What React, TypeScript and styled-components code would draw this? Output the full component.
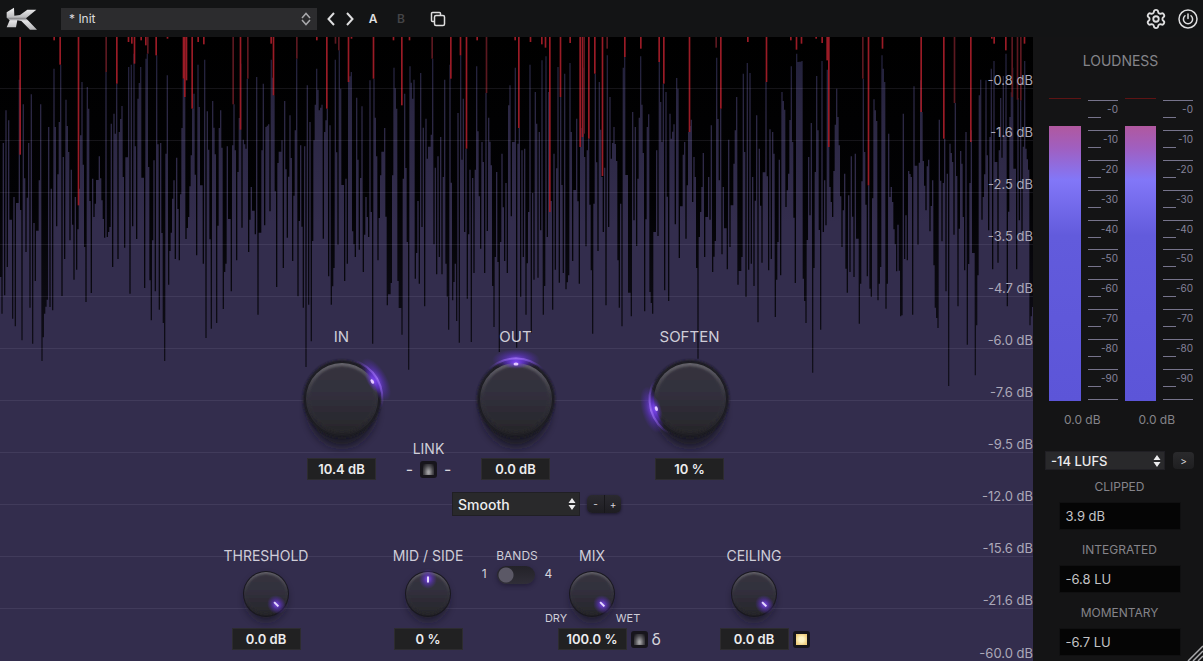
import React from 'react';
import styled, { createGlobalStyle } from 'styled-components';
import { Settings } from 'lucide-react';

const GlobalStyle = createGlobalStyle`
  *, *::before, *::after { box-sizing: border-box; }
  body { margin: 0; background: #131415; font-family: Inter, "Liberation Sans", sans-serif; }
  button, input, select { font: inherit; color: inherit; margin: 0; }
`;

/* ---------- waveform data ---------- */

const STRIDE = 1200;

const PEAKS_A = [
  [8,338],[19,240],[26,270],[43,500],[57,148],[70,222],[84,338],[92,192],[103,578],[116,450],[120,222],[144,290],[151,475],[161,115],[165,290],[176,275],[180,103],[190,380],[199,208],[207,365],[214,418],[226,500],[238,475],[244,155],[262,170],[266,235],[276,445],[285,520],[297,378],[306,510],[317,125],[335,280],[342,250],[347,310],[350,160],[356,305],[367,227],[384,110],[395,103],[403,70],[413,205],[423,110],[437,85],[443,70],[460,390],[468,75],[472,342],[478,338],[496,370],[502,135],[520,450],[528,382],[545,293],[550,145],[555,200],[573,375],[577,235],[583,190],[594,103],[598,230],[611,88],[618,243],[626,358],[636,212],[646,372],[657,293],[660,240],[667,352],[683,348],[695,345],[699,222],[704,360],[714,425],[721,100],[729,328],[737,355],[743,145],[754,470],[768,140],[788,160],[785,360],[799,290],[807,282],[813,88],[822,195],[834,398],[845,330],[855,212],[868,255],[873,383],[886,300],[890,85],[900,345],[915,348],[921,165],[927,275],[943,330],[950,115],[958,240],[966,223],[974,305],[980,235],[988,285],[1006,88],[1016,60],[1021,175],[1035,445],[1045,150],[1054,125],[1068,202],[1075,388],[1085,228],[1099,500],[1109,150],[1120,145],[1131,378],[1142,435],[1155,293],[1180,112],[1190,235],
];
const PEAKS_B = [
  [10,445],[15,190],[28,108],[36,205],[39,148],[52,512],[63,128],[70,292],[77,265],[82,385],[92,313],[96,85],[101,412],[112,378],[123,320],[133,148],[150,103],[171,248],[181,75],[186,388],[191,205],[199,355],[210,418],[218,443],[231,108],[236,498],[244,335],[249,395],[259,188],[266,262],[272,405],[290,425],[304,370],[318,458],[325,225],[330,165],[345,112],[353,340],[358,293],[364,360],[371,355],[391,103],[398,488],[405,185],[410,280],[416,305],[425,90],[436,78],[447,185],[461,370],[474,110],[482,200],[492,130],[510,98],[514,305],[528,265],[540,350],[545,293],[550,112],[561,360],[566,325],[584,130],[596,155],[607,440],[614,412],[621,75],[629,200],[642,290],[635,385],[648,392],[658,520],[670,112],[675,80],[697,245],[704,290],[714,445],[722,78],[729,368],[741,290],[746,252],[768,360],[777,95],[784,335],[791,160],[798,185],[808,250],[815,325],[820,282],[827,143],[832,175],[851,373],[855,335],[867,305],[872,268],[878,380],[885,440],[904,470],[911,368],[924,440],[932,285],[948,82],[956,450],[962,235],[970,470],[987,328],[1002,400],[1008,200],[1029,130],[1034,365],[1043,98],[1050,128],[1057,440],[1068,255],[1078,355],[1099,155],[1109,297],[1116,305],[1120,370],[1137,388],[1147,185],[1154,238],[1167,430],[1172,108],[1189,70],[1193,95],
];
const PEAKS_C = [
  [124,92],[144,380],[152,278],[168,137],[175,300],[186,92],[193,450],[201,118],[206,350],[211,470],[224,283],[231,175],[236,345],[252,430],[263,495],[273,378],[287,370],[308,145],[313,365],[325,465],[343,207],[348,272],[367,75],[372,155],[381,310],[388,500],[395,470],[413,583],[430,250],[437,555],[444,422],[455,440],[461,168],[480,150],[485,245],[490,392],[500,408],[507,388],[517,450],[538,268],[549,458],[553,325],[562,430],[570,340],[577,395],[583,218],[590,437],[602,362],[607,400],[619,305],[629,458],[635,300],[657,195],[663,148],[672,432],[678,150],[687,320],[695,115],[702,92],[717,360],[722,203],[737,70],[751,260],[757,112],[772,203],[783,210],[793,92],[798,355],[807,418],
];
const DIPS_A = [
  [1,740],[4,850],[15,795],[22,710],[36,865],[47,888],[64,930],[78,665],[89,832],[98,940],[107,752],[127,992],[134,850],[140,808],[148,830],[154,840],[170,588],[183,797],[194,686],[210,630],[220,748],[231,718],[252,650],[258,815],[273,788],[280,560],[314,622],[321,620],[328,590],[339,710],[353,686],[374,652],[391,790],[398,588],[409,626],[433,773],[451,750],[455,870],[465,783],[475,838],[489,878],[492,992],[507,763],[523,686],[538,690],[556,626],[566,560],[590,675],[608,700],[614,923],[632,895],[650,878],[670,836],[675,725],[679,700],[692,783],[709,690],[726,592],[747,665],[765,612],[775,853],[793,585],[810,543],[830,770],[849,713],[862,622],[876,692],[894,798],[911,832],[918,1010],[924,823],[932,933],[970,625],[984,738],[995,823],[1001,713],[1012,643],[1032,752],[1040,700],[1057,603],[1065,680],[1078,658],[1089,725],[1105,620],[1116,940],[1134,690],[1162,825],[1175,758],[1193,752],
];
const DIPS_B = [
  [7,913],[20,635],[25,1018],[42,745],[48,668],[59,760],[67,590],[74,828],[97,642],[105,732],[119,680],[126,732],[139,700],[144,898],[158,810],[164,700],[168,872],[175,937],[195,605],[203,805],[213,935],[220,728],[241,655],[255,728],[262,602],[276,767],[283,890],[286,680],[297,965],[300,635],[314,692],[321,728],[334,558],[348,952],[359,800],[367,680],[377,853],[384,545],[393,907],[402,748],[411,742],[419,600],[430,853],[433,767],[443,620],[457,838],[465,718],[478,757],[489,728],[499,777],[506,735],[518,692],[537,760],[557,648],[574,720],[579,910],[593,662],[611,605],[618,825],[625,590],[653,690],[656,832],[663,888],[685,787],[689,787],[694,858],[700,570],[708,647],[732,843],[750,785],[757,850],[774,617],[795,780],[806,812],[824,582],[838,683],[858,625],[876,515],[893,985],[897,620],[914,680],[929,568],[935,725],[946,632],[965,672],[980,717],[991,650],[1012,763],[1026,680],[1036,800],[1046,718],[1053,700],[1060,767],[1071,876],[1085,697],[1105,720],[1112,686],[1127,860],[1134,635],[1141,735],[1158,530],[1180,562],[1186,758],
];
const DIPS_C = [
  [127,745],[138,878],[149,555],[158,1027],[162,713],[183,898],[190,605],[197,585],[218,560],[245,650],[256,715],[260,787],[269,725],[280,740],[297,880],[300,760],[316,523],[322,738],[331,775],[335,800],[353,810],[360,710],[374,835],[378,760],[409,723],[420,858],[424,855],[433,686],[440,690],[458,853],[472,643],[496,540],[511,603],[520,705],[524,832],[534,893],[545,633],[558,783],[566,1067],[580,613],[593,828],[612,720],[622,943],[646,1035],[653,735],[667,568],[684,600],[698,717],[713,697],[743,828],[768,717],[778,570],[786,605],[811,885],[816,830],
];

const REDS: [number, number][] = [
  [60,373],[162,30],[180,103],[235,525],[318,125],[350,160],[385,35],[395,40],[403,100],[423,30],[437,45],[443,70],[468,75],[502,25],[550,145],[554,200],[559,150],[576,235],[594,35],[611,42],[699,222],[721,298],[743,145],[813,40],[820,195],[890,85],[950,30],[980,235],[1006,40],[1016,60],[1045,155],[1054,25],[1120,145],[1180,30],
  [1205,225],[1228,30],[1296,85],[1352,145],[1381,75],[1399,355],[1431,30],[1459,188],[1545,30],[1556,293],[1591,35],[1625,42],[1636,52],[1649,545],[1681,200],[1710,38],[1740,350],[1747,320],[1752,310],[1766,325],[1784,130],[1807,437],[1821,55],[1874,80],[1922,55],[1977,95],[1991,160],[2068,305],[2148,52],[2162,235],[2243,35],[2299,155],[2372,30],[2389,58],
  [2404,40],[2448,25],[2466,38],[2486,350],[2481,90],[2588,145],[2605,465],[2647,55],[2763,245],[2831,325],[2863,218],[2912,335],[2975,25],[2982,40],[3017,60],[3036,200],[3052,208],[3062,210],[3073,40],
];
const FAINT_REDS = new Set([318, 443, 699, 743, 890, 1006, 1016, 1296, 1459, 1752, 1821, 2148, 2588, 2863, 3052, 3062, 3036]);

const WAVE_W = 3099;
const WAVE_H = 1872;
const TOP = 20;
const COL = 4;

function buildSurface() {
  const count = Math.ceil(WAVE_W / COL);
  const columns: (number | null)[] = new Array(count).fill(null);
  const shifted = (points: number[][], by: number) => points.map(([x, y]) => [x + by, y]);
  const all = [
    ...PEAKS_A,
    ...shifted(PEAKS_B, STRIDE),
    ...shifted(PEAKS_C, 2280),
    ...DIPS_A,
    ...shifted(DIPS_B, STRIDE),
    ...shifted(DIPS_C, 2280),
  ].sort((a, b) => a[0] - b[0]);
  all.forEach(([x, y]) => {
    const slot = Math.min(count - 1, Math.floor(x / COL));
    const free = columns[slot] === null ? slot : columns[slot + 1] === null ? slot + 1 : slot;
    columns[free] = y;
  });
  let path = `M0 ${WAVE_H}`;
  columns.forEach((value, i) => {
    const before = columns[i - 1] ?? columns[i - 2] ?? 560;
    const after = columns[i + 1] ?? columns[i + 2] ?? 560;
    const y = (value ?? (before + after) / 2) - TOP;
    path += `L${i * COL} ${Math.round(y)}H${(i + 1) * COL}`;
  });
  return `${path}V${WAVE_H}Z`;
}
const SURFACE = buildSurface();

/* ---------- shell ---------- */

const Shell = styled.div`
  min-height: 100vh;
  display: flex;
  flex-direction: column;
  background: #131415;
  color: #d6d5dc;
`;

const Header = styled.header`
  height: 37px;
  flex: none;
  display: flex;
  align-items: center;
  padding: 0 5px 0 6px;
  background: #131415;
`;

const PresetPicker = styled.div`
  position: relative;
  width: 256px;
  margin: 0 8px 0 23px;
  color: #a9a9ac;
  svg { position: absolute; right: 6px; top: 4px; pointer-events: none; }
`;

const PresetSelect = styled.select`
  appearance: none;
  display: block;
  width: 100%;
  height: 22px;
  border: 0;
  border-radius: 0;
  padding: 0 8px;
  background: #2c2c2e;
  color: #dcdcde;
  font-size: 12px;
`;

const HeaderButton = styled.button<{ $w: number; $dim?: boolean }>`
  width: ${(p) => p.$w}px;
  height: 24px;
  border: 0;
  padding: 0;
  background: none;
  display: flex;
  align-items: center;
  justify-content: center;
  color: ${(p) => (p.$dim ? '#444447' : '#dededf')};
  font-size: 12px;
  font-weight: 600;
`;

const HeaderTools = styled.div`
  display: flex;
  gap: 11px;
  margin-left: auto;
`;

const Main = styled.main`
  flex: 1;
  display: flex;
`;

/* ---------- stage ---------- */

const Stage = styled.section`
  position: relative;
  flex: 1;
  min-width: 0;
  overflow: hidden;
  background: #332d4d;
`;

const WaveCanvas = styled.svg`
  position: absolute;
  inset: 0;
  width: 100%;
  height: 100%;
`;

const Scale = styled.div`
  position: absolute;
  inset: 0;
  display: grid;
  grid-template-rows: repeat(12, 1fr);
`;

const ScaleRow = styled.div`
  display: flex;
  align-items: flex-end;
  justify-content: flex-end;
  border-bottom: 1px solid rgba(170, 165, 200, 0.12);
  font-size: 13px;
  line-height: 15px;
  color: #aba8b8;
  &:last-child { border-bottom: 0; }
`;

const Controls = styled.div`
  position: relative;
  padding: 292px 2px 0 0;
`;

const KnobRow = styled.div<{ $cols: string; $top?: number }>`
  display: grid;
  grid-template-columns: ${(p) => p.$cols};
  justify-content: center;
  margin-top: ${(p) => p.$top ?? 0}px;
`;

const Cell = styled.div<{ $end?: boolean }>`
  display: flex;
  flex-direction: column;
  align-items: center;
  justify-content: ${(p) => (p.$end ? 'flex-end' : 'flex-start')};
`;

const Caption = styled.label<{ $size: number }>`
  font-size: ${(p) => p.$size}px;
  line-height: 16px;
  color: #cfcdd8;
  white-space: nowrap;
`;

const Dial = styled.div<{ $size: number; $gap: number; $below: number }>`
  position: relative;
  width: ${(p) => p.$size}px;
  height: ${(p) => p.$size}px;
  margin: ${(p) => p.$gap}px 0 ${(p) => p.$below}px;
  svg { display: block; overflow: visible; }
  input { position: absolute; inset: 0; width: 100%; height: 100%; opacity: 0; }
`;

const DialRow = styled.div`
  display: flex;
  align-items: flex-end;
`;

const DialEnd = styled.span`
  width: 26px;
  font-size: 11px;
  line-height: 12px;
  margin-bottom: 4px;
  text-align: center;
  color: #cfcdd8;
`;

const ReadoutRow = styled.div`
  display: grid;
  grid-template-columns: 1fr auto 1fr;
  align-items: center;
  width: 100%;
`;

const ReadoutSide = styled.div`
  display: flex;
  align-items: center;
  gap: 4px;
  padding-left: 4px;
  width: 0;
  font-size: 16px;
  line-height: 20px;
`;

const Readout = styled.input`
  grid-column: 2;
  width: 69px;
  height: 22px;
  border: 1px solid #2d2c2f;
  padding: 0;
  background: #212122;
  color: #ececee;
  text-align: center;
  font-size: 13px;
  font-weight: 600;
`;

const LitBox = styled.input<{ $tone: 'off' | 'amber' }>`
  appearance: none;
  flex: none;
  width: 17px;
  height: 17px;
  border: 3px solid #17151c;
  border-radius: 3px;
  background: ${(p) =>
    p.$tone === 'amber'
      ? 'radial-gradient(circle, #fff3c4 30%, #f0cd7c 80%)'
      : 'radial-gradient(ellipse at 50% 75%, #a3a2a5 10%, #4b4a4f 55%, #1c1b20 90%)'};
`;

const LinkRow = styled.div`
  display: flex;
  align-items: center;
  gap: 7px;
  height: 22px;
  margin-top: 1px;
`;

const PillRow = styled.div`
  display: flex;
  align-items: center;
  gap: 10px;
  font-size: 12px;
  line-height: 16px;
`;

const PillSwitch = styled.input`
  appearance: none;
  width: 38px;
  height: 18px;
  margin-top: 2px;
  border-radius: 9px;
  background: radial-gradient(circle at 9px 9px, #5b5866 7px, transparent 8px), linear-gradient(#232228, #302e38);
  box-shadow: 0 2px 4px rgba(20, 16, 36, 0.5);
`;

const ModeRow = styled.div`
  display: flex;
  align-items: center;
  justify-content: center;
  gap: 7px;
  margin-top: 12px;
  padding-left: 42px;
`;

const Picker = styled.div<{ $w: number }>`
  position: relative;
  width: ${(p) => p.$w}px;
  color: #ececee;
  svg { position: absolute; right: 4px; top: 50%; margin-top: -6px; pointer-events: none; }
`;

const PickerSelect = styled.select<{ $h: number; $size: number }>`
  appearance: none;
  display: block;
  width: 100%;
  height: ${(p) => p.$h}px;
  border: 1px solid #201f24;
  border-radius: 0;
  padding: 0 5px;
  background: #29292b;
  font-size: ${(p) => p.$size}px;
  font-weight: 500;
`;

const StepPair = styled.div`
  display: flex;
  border-radius: 5px;
  overflow: hidden;
  box-shadow: 0 1px 3px rgba(10, 8, 20, 0.6);
`;

const StepButton = styled.button`
  width: 17px;
  height: 18px;
  border: 0;
  padding: 0;
  background: linear-gradient(#2b2a30, #1e1d22);
  color: #d6d5dc;
  font-size: 10px;
  line-height: 16px;
  & + & { border-left: 1px solid #18171b; }
`;

/* ---------- loudness sidebar ---------- */

const Sidebar = styled.aside`
  width: 170px;
  flex: none;
  position: relative;
  padding: 16px 9px 0 12px;
  background: #141415;
  color: #85848a;
`;

const SideTitle = styled.h2`
  margin: 0;
  padding-left: 2px;
  text-align: center;
  font-size: 14px;
  font-weight: 400;
  line-height: 16px;
`;

const Meters = styled.div`
  display: grid;
  grid-template-columns: 32px 30px 31px 30px;
  column-gap: 7px;
  margin: 29px 0 0 4px;
`;

const MeterTrack = styled.div`
  height: 303px;
  display: flex;
  flex-direction: column;
  border-top: 1px solid #5e1414;
`;

const MeterFill = styled.div`
  height: 275px;
  margin-top: auto;
  background: linear-gradient(#b0589f 0, #a05fc0 22px, #8277f8 54px, #625bdc 110px, #5c55d8 100%);
`;

const MeterScale = styled.div`
  display: grid;
  grid-template-rows: repeat(10, 1fr);
  margin-top: 2px;
  border-bottom: 1px solid #77748c;
  height: 300px;
`;

const MeterStep = styled.div`
  border-top: 1px solid #77748c;
  text-align: right;
  font-size: 10px;
  line-height: 17px;
  color: #85839a;
  &::after { content: ''; display: block; width: 13px; height: 1px; margin-top: -1px; background: #77748c; }
`;

const PeakRow = styled.div`
  display: grid;
  grid-template-columns: 1fr 1fr;
  margin-top: 11px;
  font-size: 12px;
  line-height: 16px;
  text-align: center;
`;

const TargetRow = styled.div`
  display: flex;
  align-items: center;
  justify-content: space-between;
  margin-top: 23px;
`;

const NextButton = styled.button`
  width: 21px;
  height: 17px;
  border: 0;
  border-radius: 4px;
  padding: 0;
  background: linear-gradient(#2a2a2c, #1f1f21);
  color: #d6d5dc;
  font-size: 10px;
  line-height: 16px;
`;

const Stats = styled.div`
  display: flex;
  flex-direction: column;
  gap: 12px;
  margin-top: 9px;
`;

const Stat = styled.div`
  display: flex;
  flex-direction: column;
  align-items: center;
  label { font-size: 12px; line-height: 16px; }
  input {
    width: 122px;
    height: 28px;
    margin-top: 7px;
    border: 1px solid #101011;
    padding: 0 6px;
    background: #050505;
    color: #c4c4c6;
    font-size: 13px;
  }
`;

const Grip = styled.svg`
  position: absolute;
  right: 0;
  bottom: 0;
`;

/* ---------- parts ---------- */

const Logo = () => (
  <svg width="32" height="24" viewBox="18 20 96 72" role="img" aria-label="K">
    <defs>
      <linearGradient id="steel" x1="0" y1="0" x2="0" y2="1">
        <stop offset="0" stopColor="#f4f4f5" />
        <stop offset=".42" stopColor="#bdbdbf" />
        <stop offset=".5" stopColor="#8a8a8d" />
        <stop offset=".6" stopColor="#e4e4e6" />
        <stop offset="1" stopColor="#b4b4b6" />
      </linearGradient>
    </defs>
    <path d="M20 36 42 22 43 46 60 44 82 28H109L78 54 111 88H90L64 62 52 60 48 81H20L29 60 20 52Z" fill="url(#steel)" />
  </svg>
);

const SmallArrows = () => (
  <svg width="8" height="12" viewBox="0 0 8 12" fill="currentColor" aria-hidden="true">
    <path d="M4 0 7.500 5H.5ZM4 12 .5 7H7.500Z" />
  </svg>
);

const DefsHost = styled.svg`
  position: absolute;
`;

const Defs = () => (
  <DefsHost width="0" height="0" aria-hidden="true">
    <defs>
      <linearGradient id="rim" x1="0" y1="0" x2="0" y2="1">
        <stop offset="0" stopColor="#66646c" />
        <stop offset=".45" stopColor="#35343d" />
        <stop offset="1" stopColor="#222126" />
      </linearGradient>
      <linearGradient id="face" x1="0" y1="0" x2="0" y2="1">
        <stop offset="0" stopColor="#36343d" />
        <stop offset=".45" stopColor="#312f3c" />
        <stop offset="1" stopColor="#27272a" />
      </linearGradient>
      <linearGradient id="arc" x1="0" y1="0" x2="1" y2="0">
        <stop offset="0" stopColor="#7a4be0" stopOpacity="0" />
        <stop offset=".5" stopColor="#a87cf5" />
        <stop offset="1" stopColor="#7a4be0" stopOpacity="0" />
      </linearGradient>
      <radialGradient id="halo">
        <stop offset="0" stopColor="#8a50ff" stopOpacity=".95" />
        <stop offset=".5" stopColor="#6534d8" stopOpacity=".5" />
        <stop offset="1" stopColor="#5a2cc8" stopOpacity="0" />
      </radialGradient>
      <filter id="soft" x="-40%" y="-40%" width="180%" height="180%">
        <feGaussianBlur stdDeviation="4" />
      </filter>
      <filter id="edge" x="-10%" y="-10%" width="120%" height="120%">
        <feGaussianBlur stdDeviation="1" />
      </filter>
    </defs>
  </DefsHost>
);

const BigFace = ({ angle }: { angle: number }) => (
  <svg width="76" height="76" viewBox="-38 -38 76 76" aria-hidden="true">
    <ellipse cy="10" rx="34" ry="38" fill="#17141f" opacity=".8" filter="url(#soft)" />
    <circle r="39" fill="#1b1a22" filter="url(#edge)" />
    <g transform={`rotate(${angle})`}>
      <ellipse cy="-39" rx="24" ry="11" fill="url(#halo)" />
    </g>
    <circle r="36" fill="url(#rim)" />
    <circle r="33" fill="url(#face)" filter="url(#edge)" />
    <g transform={`rotate(${angle})`}>
      <path d="M-28 -29A40 40 0 0 1 28 -29" fill="none" stroke="url(#arc)" strokeWidth="2" />
      <ellipse cy="-36" rx="14" ry="6" fill="url(#halo)" />
      <ellipse cy="-35" rx="2.500" ry="1.500" fill="#e2c8ff" />
    </g>
  </svg>
);

const SmallFace = ({ angle }: { angle: number }) => (
  <svg width="46" height="46" viewBox="-23 -23 46 46" aria-hidden="true">
    <ellipse cy="5" rx="20" ry="22" fill="#17141f" opacity=".7" filter="url(#soft)" />
    <circle r="23" fill="#19181f" />
    <circle r="22" fill="url(#rim)" />
    <circle r="20" fill="url(#face)" filter="url(#edge)" />
    <g transform={`rotate(${angle})`}>
      <ellipse cy="-15" rx="9" ry="10" fill="url(#halo)" />
      <path d="M0 -17.500V-11.500" stroke="#e6dcff" strokeWidth="2" />
    </g>
  </svg>
);

type KnobProps = {
  name: string;
  value: string;
  angle: number;
  level: number;
  big?: boolean;
  ends?: [string, string];
  side?: React.ReactNode;
};

const Knob = ({ name, value, angle, level, big, ends, side }: KnobProps) => {
  const id = `knob-${name.replace(/[^A-Z]/g, '').toLowerCase()}`;
  return (
    <Cell>
      <Caption $size={big ? 15 : 14} htmlFor={id}>
        {name}
      </Caption>
      <DialRow>
        {ends && <DialEnd>{ends[0]}</DialEnd>}
        <Dial $size={big ? 76 : 46} $gap={big ? 16 : 7} $below={big ? 21 : 11}>
          {big ? <BigFace angle={angle} /> : <SmallFace angle={angle} />}
          <input id={id} type="range" min={0} max={100} defaultValue={level} />
        </Dial>
        {ends && <DialEnd>{ends[1]}</DialEnd>}
      </DialRow>
      <ReadoutRow>
        <Readout type="text" defaultValue={value} aria-label={`${name} value`} />
        {side && <ReadoutSide>{side}</ReadoutSide>}
      </ReadoutRow>
    </Cell>
  );
};

const Waveform = () => (
  <WaveCanvas viewBox={`0 0 ${WAVE_W} ${WAVE_H}`} preserveAspectRatio="none" aria-hidden="true">
    <defs>
      <linearGradient id="surface" gradientUnits="userSpaceOnUse" x1="0" y1="0" x2="0" y2="560">
        <stop offset="0" stopColor="#1f1f38" />
        <stop offset=".4" stopColor="#2b2743" />
        <stop offset="1" stopColor="#332d4d" />
      </linearGradient>
      <linearGradient id="depth" gradientUnits="userSpaceOnUse" x1="0" y1="0" x2="0" y2="1000">
        <stop offset="0" stopColor="#000000" />
        <stop offset=".5" stopColor="#020204" />
        <stop offset="1" stopColor="#12101c" />
      </linearGradient>
    </defs>
    <rect width={WAVE_W} height="1100" fill="url(#depth)" />
    <path d={SURFACE} fill="url(#surface)" />
    {REDS.map(([x, y]) => (
      <rect key={x} x={x - 2} width="5" height={y - TOP} fill={FAINT_REDS.has(x) ? '#5c1820' : '#9a1b26'} />
    ))}
  </WaveCanvas>
);

const LEVELS = ['-0.8', '-1.6', '-2.5', '-3.5', '-4.7', '-6.0', '-7.6', '-9.5', '-12.0', '-15.6', '-21.6', '-60.0'];
const STEPS = ['-0', '-10', '-20', '-30', '-40', '-50', '-60', '-70', '-80', '-90'];
const STATS = [
  ['CLIPPED', '3.9 dB'],
  ['INTEGRATED', '-6.8 LU'],
  ['MOMENTARY', '-6.7 LU'],
];

const Meter = () => (
  <>
    <MeterTrack>
      <MeterFill />
    </MeterTrack>
    <MeterScale>
      {STEPS.map((s) => (
        <MeterStep key={s}>{s}</MeterStep>
      ))}
    </MeterScale>
  </>
);

export default function App() {
  return (
    <Shell>
      <GlobalStyle />
      <Defs />
      <Header>
        <Logo />
        <PresetPicker>
          <PresetSelect aria-label="Preset" defaultValue="init">
            <option value="init">* Init</option>
          </PresetSelect>
          <svg width="10" height="14" viewBox="0 0 10 14" fill="none" stroke="currentColor" strokeWidth="1.500" aria-hidden="true">
            <path d="M1 6 5 1.500 9 6M1 8 5 12.500 9 8" />
          </svg>
        </PresetPicker>
        <HeaderButton $w={12} aria-label="Previous preset">
          <svg width="8" height="14" viewBox="0 0 8 14" fill="none" stroke="currentColor" strokeWidth="2">
            <path d="M7 1 1.500 7 7 13" />
          </svg>
        </HeaderButton>
        <HeaderButton $w={26} aria-label="Next preset">
          <svg width="8" height="14" viewBox="0 0 8 14" fill="none" stroke="currentColor" strokeWidth="2">
            <path d="M1 1 6.500 7 1 13" />
          </svg>
        </HeaderButton>
        <HeaderButton $w={20}>A</HeaderButton>
        <HeaderButton $w={36} $dim>
          B
        </HeaderButton>
        <HeaderButton $w={38} aria-label="Copy settings">
          <svg width="16" height="16" viewBox="0 0 16 16" fill="none" stroke="currentColor" strokeWidth="1.500">
            <rect x="4.500" y="4.500" width="10" height="10" rx="1.500" />
            <path d="M4.500 10.500H2.500A1 1 0 0 1 1.500 9.500V2.500A1 1 0 0 1 2.500 1.500H9.500A1 1 0 0 1 10.500 2.500V4.500" />
          </svg>
        </HeaderButton>
        <HeaderTools>
          <HeaderButton $w={22} aria-label="Settings">
            <Settings size={22} strokeWidth={2} />
          </HeaderButton>
          <HeaderButton $w={20} aria-label="Power">
            <svg width="20" height="20" viewBox="0 0 20 20" fill="none" stroke="currentColor" strokeWidth="1.500" strokeLinecap="round">
              <circle cx="10" cy="10" r="9" />
              <path d="M10 5V9.500M7 6.700A4.600 4.600 0 1 0 13 6.700" />
            </svg>
          </HeaderButton>
        </HeaderTools>
      </Header>
      <Main>
        <Stage>
          <Waveform />
          <Scale>
            {LEVELS.map((l) => (
              <ScaleRow key={l}>{l} dB</ScaleRow>
            ))}
          </Scale>
          <Controls>
            <KnobRow $cols="100px 74px 100px 74px 100px">
              <Knob big name="IN" value="10.4 dB" angle={60} level={67} />
              <Cell $end>
                <Caption $size={14} htmlFor="link">
                  LINK
                </Caption>
                <LinkRow>
                  <span>-</span>
                  <LitBox id="link" type="checkbox" $tone="off" />
                  <span>-</span>
                </LinkRow>
              </Cell>
              <Knob big name="OUT" value="0.0 dB" angle={0} level={50} />
              <span />
              <Knob big name="SOFTEN" value="10 %" angle={-106} level={10} />
            </KnobRow>
            <ModeRow>
              <Picker $w={128}>
                <PickerSelect $h={24} $size={14} aria-label="Mode" defaultValue="smooth">
                  <option value="smooth">Smooth</option>
                </PickerSelect>
                <SmallArrows />
              </Picker>
              <StepPair>
                <StepButton aria-label="Previous mode">-</StepButton>
                <StepButton aria-label="Next mode">+</StepButton>
              </StepPair>
            </ModeRow>
            <KnobRow $cols="100px 62px 100px 8px 62px 88px 68px 100px 11px" $top={32}>
              <Knob name="THRESHOLD" value="0.0 dB" angle={135} level={100} />
              <span />
              <Knob name="MID / SIDE" value="0 %" angle={0} level={50} />
              <span />
              <Cell>
                <Caption $size={12} htmlFor="bands">
                  BANDS
                </Caption>
                <PillRow>
                  <span>1</span>
                  <PillSwitch id="bands" type="checkbox" />
                  <span>4</span>
                </PillRow>
              </Cell>
              <Knob
                name="MIX"
                value="100.0 %"
                angle={135}
                level={100}
                ends={['DRY', 'WET']}
                side={
                  <>
                    <LitBox type="checkbox" aria-label="Delta" $tone="off" />
                    <span>δ</span>
                  </>
                }
              />
              <span />
              <Knob
                name="CEILING"
                value="0.0 dB"
                angle={135}
                level={100}
                side={<LitBox type="checkbox" aria-label="Ceiling on" defaultChecked $tone="amber" />}
              />
            </KnobRow>
          </Controls>
        </Stage>
        <Sidebar>
          <SideTitle>LOUDNESS</SideTitle>
          <Meters>
            <Meter />
            <Meter />
          </Meters>
          <PeakRow>
            <span>0.0 dB</span>
            <span>0.0 dB</span>
          </PeakRow>
          <TargetRow>
            <Picker $w={120}>
              <PickerSelect $h={19} $size={13} aria-label="Loudness target" defaultValue="14">
                <option value="14">-14 LUFS</option>
              </PickerSelect>
              <SmallArrows />
            </Picker>
            <NextButton aria-label="Next target">&gt;</NextButton>
          </TargetRow>
          <Stats>
            {STATS.map(([name, value]) => (
              <Stat key={name}>
                <label htmlFor={name}>{name}</label>
                <input id={name} type="text" readOnly value={value} />
              </Stat>
            ))}
          </Stats>
          <Grip width="16" height="16" viewBox="0 0 16 16" stroke="#a9a9ac" strokeWidth="1.500" aria-hidden="true">
            <path d="M1 16 16 1M6 16 16 6M11 16 16 11" />
          </Grip>
        </Sidebar>
      </Main>
    </Shell>
  );
}
